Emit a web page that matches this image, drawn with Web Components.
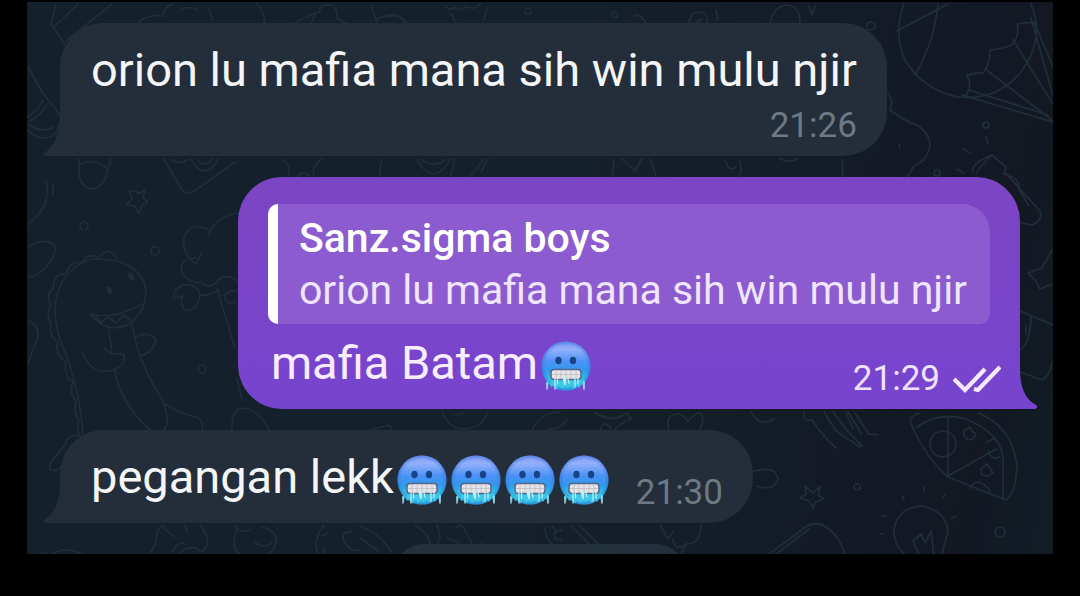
<!DOCTYPE html>
<html lang="id">
<head>
<meta charset="utf-8">
<meta name="viewport" content="width=device-width, initial-scale=1">
<title>Chat</title>
<style>
  html, body { margin: 0; height: 100%; background: #000; }
  body { font-family: Roboto, "Noto Sans", sans-serif; color: #f3f5f7; }
</style>
</head>
<body>
<chat-window>
  <chat-message time="21:26" stacked>orion lu mafia mana sih win mulu njir</chat-message>
  <chat-message time="21:29" outgoing>
    <chat-quote slot="quote" author="Sanz.sigma boys">orion lu mafia mana sih win mulu njir</chat-quote>mafia Batam<cold-face></cold-face>
  </chat-message>
  <chat-message time="21:30">pegangan lekk<cold-face></cold-face><cold-face></cold-face><cold-face></cold-face><cold-face></cold-face></chat-message>
  <chat-notice></chat-notice>
</chat-window>

<script>
const attach = (el, html) => {
  el.attachShadow({ mode: 'open' }).innerHTML = html;
};

/* Doodle wallpaper that fills the conversation pane */
customElements.define('chat-wallpaper', class extends HTMLElement {
  constructor() {
    super();
    attach(this, `
<style>
  :host { display: block; position: absolute; inset: 0; background: linear-gradient(100deg, #14212c 0%, #14202b 50%, #131823 92%, #111d26 100%); }
  svg { display: block; width: 100%; height: 100%; }
</style>
<svg viewBox="27 0 1026 554" preserveAspectRatio="xMinYMin slice" fill="none" stroke="#202e39" stroke-width="1.7" stroke-linecap="round" stroke-linejoin="round" aria-hidden="true">
  <path d="M56 2L51 22L68 47M78 2L54 25M112 2L66 39M138 21Q146 12 163 14Q164 5 172 2M180 8Q190 3 197 8M209 6L213 20M257 2Q266 12 264 22M293 22Q306 14 319 10Q321 1 331 3Q339 7 336 16L346 21M315 12L311 22"/>
  <path d="M28 65L42 90L62 116M43 98Q39 108 28 115M47 102Q42 112 30 119M28 128Q39 140 52 134Q58 131 60 120M28 122Q42 132 54 125"/>
  <path d="M371 4L377 20M375 18Q398 6 408 22M386 15Q401 10 405 22M446 4Q449 10 455 5Q461 11 466 4Q474 9 480 2M451 12L456 22M488 5L482 22M634 14Q640 10 646 22M689 21Q690 10 699 10Q709 11 707 22M697 20L702 17M716 8L718 18M770 21Q773 6 785 3Q800 3 800 20M808 3L812 13L815 4"/>
  <circle cx="528" cy="9" r="3"/><circle cx="615" cy="13" r="3"/><circle cx="871" cy="24" r="4"/>
  <path d="M904 2Q893 31 905 58Q923 88 958 95Q1000 99 1023 67Q1045 37 1031 2M938 2Q934 41 915 73M897 29L948 2M966 93Q973 82 967 74Q974 70 983 71Q990 63 990 48Q1002 47 1012 43Q1020 34 1017 22L1034 20L1053 65M1013 38L1053 102M985 67L1052 118M962 93L1053 120M969 88L1048 113M1031 16L1053 94"/>
  <path d="M885 89Q895 95 890 108Q906 120 917 123Q933 134 929 148Q925 160 914 164L907 175M842 158L843 176M899 142L900 146"/>
  <path d="M79 157V173Q82 187 93 187Q105 184 108 167L111 157M81 162Q94 156 106 166M164 157L182 188Q188 194 196 188L235 160M172 158Q180 163 187 158M191 157Q197 169 206 169Q216 165 217 157M197 157Q205 167 212 157M282 157L289 164L288 177M313 177L314 165L321 157M296 176Q302 168 310 174M46 178Q52 205 28 222M53 182V192"/>
  <path d="M382 157Q379 167 380 176M417 157Q422 170 435 172Q446 168 450 157M422 158Q434 166 445 158M455 157L450 176M484 157L470 175M488 157L481 170M614 157L612 176M622 157L635 169L642 157M650 157L657 176M725 158Q729 171 736 165M739 158Q744 169 738 176M780 157Q789 161 797 157"/>
  <path d="M136 189L129 189L132 197L126 203L134 204L139 211L142 203L148 200L143 196L145 188L138 192Z"/>
  <circle cx="84" cy="224" r="4"/><circle cx="155" cy="249" r="4"/><circle cx="202" cy="367" r="4"/>
  <path d="M28 245Q47 235 54 243Q58 251 47 264Q37 275 28 275M28 319Q38 321 38 334L28 362M97 257Q76 258 62 280Q48 306 62 343Q79 383 83 432M97 257Q136 257 145 283Q149 306 131 321Q115 330 101 322L90 312Q112 317 131 307L143 302M96 314L101 321L108 315L116 321L124 313L131 318"/>
  <path d="M117 257Q109 242 99 256Q88 250 82 261Q70 258 66 272Q53 271 53 287Q45 292 51 304Q45 312 51 321Q48 335 58 339Q54 353 66 360Q63 373 73 381Q69 392 76 399Q73 411 79 418Q76 427 80 434Q68 431 65 443L51 460Q46 470 58 468L71 454M109 328L112 350M132 322Q137 355 155 386Q169 405 167 423Q160 437 149 427Q120 400 115 369M83 352Q93 374 113 368Q126 364 124 353Q120 351 112 352L104 346M136 335Q147 329 156 337Q153 351 140 354M165 402Q178 411 196 415Q206 419 201 430"/>
  <path d="M209 233Q215 215 237 211M211 229Q192 218 184 235Q182 253 196 262L202 251M196 256Q178 256 182 271Q190 282 200 280Q211 289 218 278Q228 271 237 279M217 287L235 346M219 288Q206 295 200 293Q198 282 184 283Q173 286 174 296L183 294Q179 302 185 308Q199 309 200 292M235 300Q226 303 225 295Q226 288 237 289M237 377L242 398M232 428Q231 406 243 406Q258 407 270 429"/>
  <path d="M110 290l-1-3M132 276l-2-3" stroke-width="5"/>
  <path d="M973 170Q970 162 992 153L1006 165Q1003 171 1009 175L1040 209Q1043 218 1032 223L1018 220M992 153Q979 165 976 172M1003 172Q1020 175 1019 188M1020 189L1029 204M963 147L970 151M986 135L988 142M957 167L964 171"/>
  <circle cx="986" cy="123" r="3"/><circle cx="937" cy="171" r="3"/>
  <path d="M1052 248L1042 266L1028 271L1036 279L1040 287L1052 282M1020 309L1053 323M1031 315Q1030 341 1021 347M1021 370L1042 378Q1050 374 1052 360M1026 332V324"/>
  <path d="M370 428L389 423L394 430M442 410Q448 426 463 427Q483 426 487 411M455 413L463 411M532 428Q541 410 560 410M567 418Q560 428 548 427M594 410Q613 422 627 411L631 417Q617 422 614 430M600 429Q603 417 611 426M669 428Q664 412 679 412Q686 415 688 420Q700 404 703 417Q702 425 698 431"/>
  <path d="M751 410Q761 426 774 417M804 410Q803 420 812 418L820 429Q828 439 836 446M824 410L836 429L860 445M833 410L846 427L862 444M846 411L853 426M848 410L861 431M855 411L869 432L878 433"/>
  <path d="M911 422Q908 414 920 411M911 422Q926 456 948 475L1006 498Q1016 492 1017 463Q1012 424 978 411M917 425Q939 409 966 417Q1005 433 1003 462V497M948 415V474L996 447"/>
  <circle cx="943" cy="442" r="13"/><path d="M964 429l6-4 3 5 3 2-3 5-5 1-4-4zM981 467l6-5 3 4 3 5-5 3-6-1zM970 486Q978 473 990 489M987 440Q995 434 998 441M999 455Q991 459 988 448M754 469Q777 463 778 478Q773 490 757 484"/>
  <path d="M805 484L813 491L820 484L818 493L824 497L815 500L813 506L809 499L800 496L806 492Z"/><circle cx="857" cy="485" r="3"/><circle cx="1000" cy="530" r="5"/>
  <path d="M768 553L807 524Q818 519 826 525Q841 535 845 554M775 553L809 527M907 554Q893 544 894 527Q898 505 922 504Q947 509 948 531Q943 544 942 554M919 553L913 539L921 532L925 541L931 529L934 554M902 494L904 498M924 485V489M943 495L946 492M881 514H886M881 532H884M952 516L956 514"/>
  <path d="M149 551Q155 548 157 531Q162 522 164 523M163 525L174 535M185 523L187 529M200 523Q211 537 206 545Q202 553 198 547Q188 543 180 551M172 550Q177 539 185 542M235 523Q238 532 250 528M237 528Q229 548 243 553M262 525Q277 528 276 541Q273 553 260 554M254 539Q264 549 272 540M40 553Q44 549 50 553Q65 543 84 553M319 553Q311 540 324 523M324 546L325 554M322 534L328 531M352 530Q340 529 344 539Q350 551 360 548"/>
  <path d="M360 524Q383 533 393 553M360 536L378 549M415 523Q431 532 431 548M437 523Q445 544 430 544M455 526L462 523L474 545M447 536L459 541M482 541Q487 549 480 552M545 526Q545 537 554 544L562 554M552 524L557 531M570 523L600 553M579 523L610 553M562 529A5 5 0 1 0 562 537M660 523L668 537L673 530M673 537Q673 550 687 542M701 523Q701 542 686 542L680 554"/>
</svg>`);
  }
});

/* Cold face sticker, as wide as an emoji in the message font */
customElements.define('cold-face', class extends HTMLElement {
  constructor() {
    super();
    attach(this, `
<style>
  :host { display: inline-block; width: 54px; height: 54px; vertical-align: -11px; }
  svg { display: block; width: 100%; height: 100%; overflow: visible; }
</style>
<svg viewBox="0 0 54 54" role="img" aria-label="🥶">
  <defs>
    <linearGradient id="skin" x1="0" y1="0" x2="0" y2="1">
      <stop offset="0" stop-color="#7c98f0"/><stop offset=".16" stop-color="#94b0fb"/><stop offset=".42" stop-color="#4a92f7"/><stop offset=".6" stop-color="#3299ec"/><stop offset=".76" stop-color="#2fc4e6"/><stop offset="1" stop-color="#2bb4dc"/>
    </linearGradient>
    <radialGradient id="edge"><stop offset=".84" stop-color="#2f6ad8" stop-opacity="0"/><stop offset="1" stop-color="#2f6ad8" stop-opacity=".5"/></radialGradient>
  </defs>
  <circle cx="28" cy="30" r="24.5" fill="url(#skin)"/>
  <circle cx="28" cy="30" r="24.5" fill="url(#edge)"/>
  <ellipse cx="20.500" cy="24.500" rx="3.200" ry="3.800" fill="#174486"/>
  <ellipse cx="35" cy="24.500" rx="3.200" ry="3.800" fill="#174486"/>
  <path d="M8 47l2-3 2 3 2-2 3-4 23 0 4 4 2-2 1 3-1 8-2-6-3 4-3-3-2 4-3-3-3 2-3-1-3 2-3-3-2 4-3-5-3 2-2-4-1 5z" fill="#45cbea" opacity=".75"/>
  <rect x="13" y="33.500" width="30" height="10" rx="3" fill="#e5e4e6" stroke="#53658d" stroke-width="1.500"/>
  <path d="M14 38.500h28M18 34v9M23 34v9M28 34v9M33 34v9M38 34v9" stroke="#bdb8bd" stroke-width=".7"/>
  <path d="M17 43v10M19.500 43v5M25 42l2 7 1-7M30 43l1 4M37 42v9M40 43v5M9 47v6M46 46v7" fill="#c8f3fb" stroke="#b5edf8" stroke-width="1.300" stroke-linecap="round"/>
</svg>`);
  }
});

/* Quoted message shown at the top of a reply */
customElements.define('chat-quote', class extends HTMLElement {
  constructor() {
    super();
    attach(this, `
<style>
  :host { display: block; }
  blockquote { margin: 0 11px 12px 0; padding: 8px 23px 8px 21px; border-left: 10px solid #fff; border-radius: 10px 28px 10px 10px; background: #8b5bcf; font-size: 41px; line-height: 52px; white-space: nowrap; }
  cite { display: block; font-style: normal; font-weight: 500; color: #fff; }
  div { color: #f0e5fb; }
</style>
<blockquote><cite></cite><div><slot></slot></div></blockquote>`);
  }
  connectedCallback() {
    this.shadowRoot.querySelector('cite').textContent = this.getAttribute('author');
  }
});

/* Message bubble: tail on the left by default, on the right when outgoing */
customElements.define('chat-message', class extends HTMLElement {
  constructor() {
    super();
    attach(this, `
<style>
  :host { display: block; position: relative; flex: none; align-self: flex-start; box-sizing: border-box; padding: 20px 30px 10px 31px; border-radius: 44px 44px 44px 0; background: #232e3a; --time: #6d7984; }
  :host([outgoing]) { align-self: flex-end; padding: 27px 19px 10px 30px; border-radius: 44px 44px 0 44px; background: linear-gradient(#7c45c3, #7744cf); color: #f7edff; --time: #f0e2fc; }
  .row { display: flex; justify-content: space-between; align-items: flex-end; gap: 26px; }
  :host([stacked]) .row { flex-direction: column; align-items: flex-end; gap: 0; }
  .text { font-size: 47px; line-height: 54px; padding-bottom: 9px; white-space: nowrap; }
  :host([outgoing]) .text { padding-left: 3px; }
  .meta { display: flex; align-items: center; gap: 13px; font-size: 35px; line-height: 40px; color: var(--time); }
  .checks { display: none; width: 48px; height: 28px; }
  .tail { position: absolute; bottom: 0; width: 17px; height: 40px; fill: #232e3a; }
  .in { right: 100%; }
  .out { left: 100%; fill: #7744cf; display: none; }
  :host([outgoing]) .in { display: none; }
  :host([outgoing]) .out, :host([outgoing]) .checks { display: block; }
</style>
<slot name="quote"></slot>
<div class="row">
  <div class="text"><slot></slot></div>
  <div class="meta"><time></time>
    <svg class="checks" viewBox="0 0 48 28" fill="none" stroke="#f7eaff" stroke-width="4.200" aria-label="Dibaca" role="img"><path d="M1 14l11 11L32 4M21 24l4 1L47 2"/></svg>
  </div>
</div>
<svg class="tail in" viewBox="0 0 17 40" aria-hidden="true"><path d="M17 0C17 18 12 30 1 37Q0 40 3 40H17Z"/></svg>
<svg class="tail out" viewBox="0 0 17 40" aria-hidden="true"><path d="M0 0C0 18 5 30 16 36Q19 38 15 40H0Z"/></svg>`);
  }
  connectedCallback() {
    this.shadowRoot.querySelector('time').textContent = this.getAttribute('time');
  }
});

/* Centred service notice, scrolled mostly below the fold */
customElements.define('chat-notice', class extends HTMLElement {
  constructor() {
    super();
    attach(this, `
<style>
  :host { display: block; flex: none; align-self: center; width: 292px; height: 60px; border-radius: 30px; background: #263641cc; }
</style>`);
  }
});

customElements.define('chat-window', class extends HTMLElement {
  constructor() {
    super();
    attach(this, `
<style>
  :host { display: flex; box-sizing: border-box; height: 100vh; padding: 2px 27px 42px; }
  main { position: relative; flex: 1; min-width: 0; overflow: hidden; }
  .list { position: relative; display: flex; flex-direction: column; gap: 21px; padding: 21px 33px 0; }
</style>
<main><chat-wallpaper></chat-wallpaper><div class="list"><slot></slot></div></main>`);
  }
});
</script>
</body>
</html>
